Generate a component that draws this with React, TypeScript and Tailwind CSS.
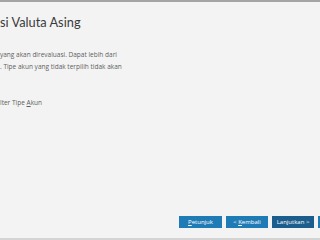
import React from "react";

export default function App() {
  return (
    <div
      className="w-[320px] h-[240px] bg-[#f3f3f3] flex flex-col overflow-hidden border-t-2 border-[#a4a4a4]"
      style={{ fontFamily: '"Open Sans", "Noto Sans", sans-serif' }}
    >
      <div
        className="pt-[12px] pl-0 text-[12.8px] leading-[16px] text-[#3a3a3a]"
        style={{ fontFamily: 'Lato, "Open Sans", sans-serif' }}
      >
        si Valuta Asing
      </div>
      <div className="mt-[19px] text-[6.5px] leading-[12px] text-[#5e5e5e]">
        <div>yang akan direvaluasi. Dapat lebih dari</div>
        <div>. Tipe akun yang tidak terpilih tidak akan</div>
      </div>
      <div className="mt-[24px] text-[6.5px] leading-[12px] text-[#5e5e5e]">
        lter Tipe <span className="underline">A</span>kun
      </div>
      <div className="flex-1" />
      <div className="flex gap-[4px] pl-[179px] mb-[10px] whitespace-nowrap">
        <div className="w-[43px] h-[12px] shrink-0 bg-[#1f7bb6] text-white text-[6px] flex items-center justify-center">
          <span><span className="underline">P</span>etunjuk</span>
        </div>
        <div className="w-[42px] h-[12px] shrink-0 bg-[#1f7bb6] text-white text-[6px] flex items-center justify-center">
          <span>&lt; <span className="underline">K</span>embali</span>
        </div>
        <div className="w-[42px] h-[12px] shrink-0 bg-[#1b5d8c] text-white text-[6px] flex items-center justify-center">
          <span>Lan<span className="underline">j</span>utkan &gt;</span>
        </div>
        <div className="w-[42px] h-[12px] shrink-0 bg-[#1f7bb6]" />
      </div>
      <div className="h-[2px] bg-[#d4d4d4]" />
    </div>
  );
}
